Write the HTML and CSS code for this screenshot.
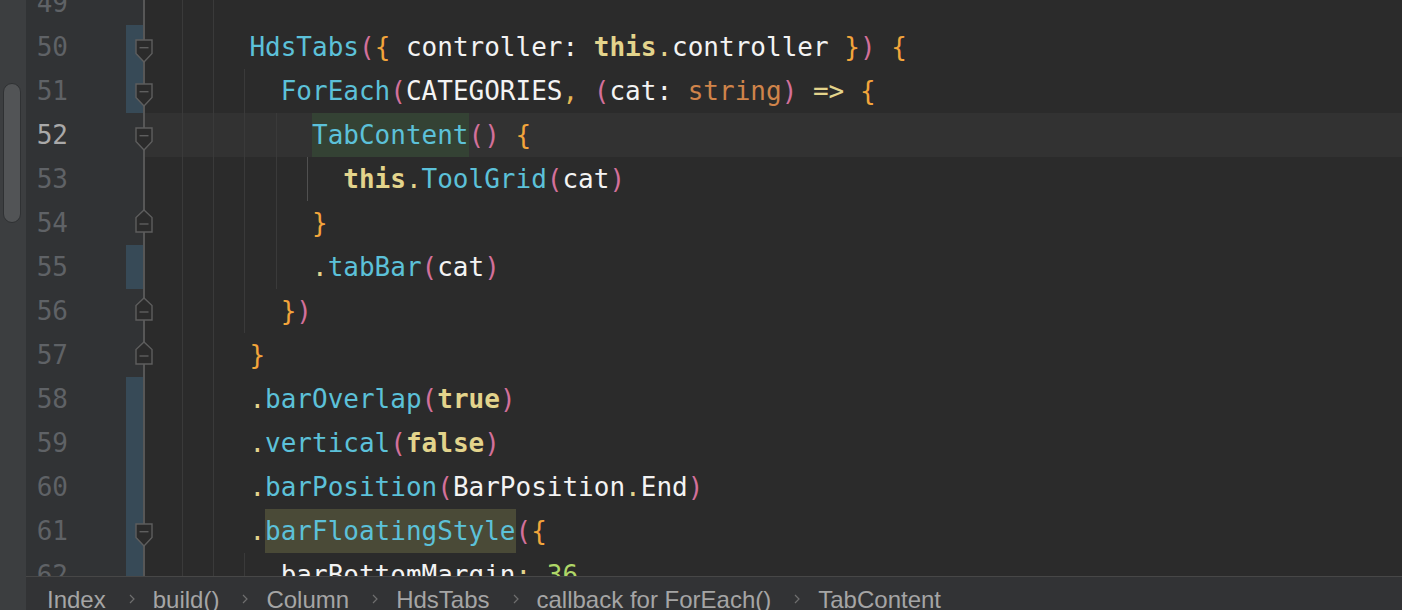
FILE: index.html
```html
<!DOCTYPE html>
<html>
<head>
<meta charset="utf-8">
<title>Editor</title>
<link rel="stylesheet" href="styles.css">
</head>
<body>
<div class="ide">
  <aside class="strip"><div class="thumb"></div></aside>
  <div class="main">
    <div class="editor">
      <div class="lines">
        <div class="row">
          <div class="gut"><span class="num">49</span><span class="mark"></span></div>
          <div class="code"><span class="ind g"></span><span class="ind g"></span></div>
        </div>
        <div class="row chg">
          <div class="gut"><span class="num">50</span><span class="mark"></span>
            <svg class="fold open" viewBox="0 0 18 24"><path d="M1 1H17V14.5L9 23L1 14.5Z"/><path d="M4.5 8.7H13.5"/></svg></div>
          <div class="code"><span class="ind g"></span><span class="ind g"></span><span class="ind"></span><span class="txt"><span class="f">HdsTabs</span><span class="p">(</span><span class="b">{</span> controller: <span class="k">this</span><span class="d">.</span>controller <span class="b">}</span><span class="p">)</span> <span class="b">{</span></span></div>
        </div>
        <div class="row chg">
          <div class="gut"><span class="num">51</span><span class="mark"></span>
            <svg class="fold open" viewBox="0 0 18 24"><path d="M1 1H17V14.5L9 23L1 14.5Z"/><path d="M4.5 8.7H13.5"/></svg></div>
          <div class="code"><span class="ind g"></span><span class="ind g"></span><span class="ind g"></span><span class="ind"></span><span class="txt"><span class="f">ForEach</span><span class="p">(</span>CATEGORIES<span class="c">,</span> <span class="p">(</span>cat: <span class="t">string</span><span class="p">)</span> <span class="d">=&gt;</span> <span class="b">{</span></span></div>
        </div>
        <div class="row cur">
          <div class="gut"><span class="num">52</span><span class="mark"></span>
            <svg class="fold open" viewBox="0 0 18 24"><path d="M1 1H17V14.5L9 23L1 14.5Z"/><path d="M4.5 8.7H13.5"/></svg></div>
          <div class="code"><span class="ind g"></span><span class="ind g"></span><span class="ind g"></span><span class="ind g"></span><span class="ind"></span><span class="txt"><span class="f hl-ref">TabContent</span><span class="p">()</span> <span class="b">{</span></span></div>
        </div>
        <div class="row">
          <div class="gut"><span class="num">53</span><span class="mark"></span></div>
          <div class="code"><span class="ind g"></span><span class="ind g"></span><span class="ind g"></span><span class="ind g"></span><span class="ind gb"></span><span class="ind"></span><span class="txt"><span class="k">this</span><span class="d">.</span><span class="f">ToolGrid</span><span class="p">(</span>cat<span class="p">)</span></span></div>
        </div>
        <div class="row">
          <div class="gut"><span class="num">54</span><span class="mark"></span>
            <svg class="fold end" viewBox="0 0 18 24"><path d="M9 1L17 8.5V23H1V8.5Z"/><path d="M4.5 15H13.5"/></svg></div>
          <div class="code"><span class="ind g"></span><span class="ind g"></span><span class="ind g"></span><span class="ind g"></span><span class="ind"></span><span class="txt"><span class="b">}</span></span></div>
        </div>
        <div class="row chg">
          <div class="gut"><span class="num">55</span><span class="mark"></span></div>
          <div class="code"><span class="ind g"></span><span class="ind g"></span><span class="ind g"></span><span class="ind g"></span><span class="ind"></span><span class="txt"><span class="d">.</span><span class="f">tabBar</span><span class="p">(</span>cat<span class="p">)</span></span></div>
        </div>
        <div class="row">
          <div class="gut"><span class="num">56</span><span class="mark"></span>
            <svg class="fold end" viewBox="0 0 18 24"><path d="M9 1L17 8.5V23H1V8.5Z"/><path d="M4.5 15H13.5"/></svg></div>
          <div class="code"><span class="ind g"></span><span class="ind g"></span><span class="ind g"></span><span class="ind"></span><span class="txt"><span class="b">}</span><span class="p">)</span></span></div>
        </div>
        <div class="row">
          <div class="gut"><span class="num">57</span><span class="mark"></span>
            <svg class="fold end" viewBox="0 0 18 24"><path d="M9 1L17 8.5V23H1V8.5Z"/><path d="M4.5 15H13.5"/></svg></div>
          <div class="code"><span class="ind g"></span><span class="ind g"></span><span class="ind"></span><span class="txt"><span class="b">}</span></span></div>
        </div>
        <div class="row chg">
          <div class="gut"><span class="num">58</span><span class="mark"></span></div>
          <div class="code"><span class="ind g"></span><span class="ind g"></span><span class="ind"></span><span class="txt"><span class="d">.</span><span class="f">barOverlap</span><span class="p">(</span><span class="k">true</span><span class="p">)</span></span></div>
        </div>
        <div class="row chg">
          <div class="gut"><span class="num">59</span><span class="mark"></span></div>
          <div class="code"><span class="ind g"></span><span class="ind g"></span><span class="ind"></span><span class="txt"><span class="d">.</span><span class="f">vertical</span><span class="p">(</span><span class="k">false</span><span class="p">)</span></span></div>
        </div>
        <div class="row chg">
          <div class="gut"><span class="num">60</span><span class="mark"></span></div>
          <div class="code"><span class="ind g"></span><span class="ind g"></span><span class="ind"></span><span class="txt"><span class="d">.</span><span class="f">barPosition</span><span class="p">(</span>BarPosition<span class="d">.</span>End<span class="p">)</span></span></div>
        </div>
        <div class="row chg">
          <div class="gut"><span class="num">61</span><span class="mark"></span>
            <svg class="fold open" viewBox="0 0 18 24"><path d="M1 1H17V14.5L9 23L1 14.5Z"/><path d="M4.5 8.7H13.5"/></svg></div>
          <div class="code"><span class="ind g"></span><span class="ind g"></span><span class="ind"></span><span class="txt"><span class="d">.</span><span class="f hl-sel">barFloatingStyle</span><span class="p">(</span><span class="b">{</span></span></div>
        </div>
        <div class="row chg">
          <div class="gut"><span class="num">62</span><span class="mark"></span></div>
          <div class="code"><span class="ind g"></span><span class="ind g"></span><span class="ind g"></span><span class="ind"></span><span class="txt">barBottomMargin<span class="d">:</span> <span class="n">36</span></span></div>
        </div>
      </div>
    </div>
    <nav class="crumbs">
      <span class="crumb">Index</span>
      <svg class="sep" viewBox="0 0 6 10"><path d="M1 1L5 5L1 9"/></svg>
      <span class="crumb">build()</span>
      <svg class="sep" viewBox="0 0 6 10"><path d="M1 1L5 5L1 9"/></svg>
      <span class="crumb">Column</span>
      <svg class="sep" viewBox="0 0 6 10"><path d="M1 1L5 5L1 9"/></svg>
      <span class="crumb">HdsTabs</span>
      <svg class="sep" viewBox="0 0 6 10"><path d="M1 1L5 5L1 9"/></svg>
      <span class="crumb">callback for ForEach()</span>
      <svg class="sep" viewBox="0 0 6 10"><path d="M1 1L5 5L1 9"/></svg>
      <span class="crumb">TabContent</span>
    </nav>
  </div>
</div>
</body>
</html>
```

FILE: styles.css
```css
* { box-sizing: border-box; margin: 0; padding: 0; }
html, body { width: 1402px; height: 610px; overflow: hidden; background: #2b2b2b; }

.ide { display: flex; height: 610px; }

.strip { width: 26px; flex: none; background: #3c3e40; padding: 83px 0 0 3px; }
.thumb { width: 18px; height: 140px; border-radius: 9px; background: #525456; border: 1.5px solid #2f3133; }

.main { flex: 1; min-width: 0; display: flex; flex-direction: column; }

.editor { flex: 1; min-height: 0; overflow: hidden; background: #2b2b2b; }
.lines { margin-top: -19px; }

.row { display: flex; height: 44px; }

.gut { width: 119px; flex: none; position: relative; display: flex; background: #313335; border-right: 2px solid #575757; }
.num { width: 42px; text-align: right; font: 26px/44px "DejaVu Sans Mono", monospace; color: #5f6266; }
.cur .num { color: #a9a9a9; }
.mark { margin-left: auto; width: 17px; }
.chg .mark { background: #374a57; }

.fold { position: absolute; left: 109px; width: 18px; height: 24px; fill: #2b2b2b; stroke: #5e5e5e; stroke-width: 1.4; }
.fold.open { top: 14px; }
.fold.end { top: 8px; }

.code { flex: 1; min-width: 0; display: flex; padding-left: 10.5px; font: 26px/44px "DejaVu Sans Mono", monospace; white-space: pre; color: #f3f3f3; }
.cur .code { background: #323232; }

.ind { width: 2ch; flex: none; }
.ind.g { background: linear-gradient(#3a3a3a, #3a3a3a) no-repeat calc(100% - 4px) 0 / 1px 100%; }
.ind.gb { background: linear-gradient(#505050, #505050) no-repeat calc(100% - 4px) 0 / 1px 100%; }

.txt { display: block; }
.f { color: #5cc1d9; }
.p { color: #d3709a; }
.b { color: #f3a53b; }
.k { color: #e3d48c; font-weight: bold; }
.d { color: #e3d48c; }
.c { color: #e3b653; }
.t { color: #d0844a; }
.n { color: #afd768; }

.hl-ref { display: inline-block; background: #344234; }
.hl-sel { display: inline-block; background: #4a4a37; }

.crumbs { height: 34px; flex: none; border-top: 1px solid #474747; background: #323335; display: flex; align-items: flex-start; padding: 11px 0 0 21px; font: 24px/24px "Liberation Sans", Arial, sans-serif; color: #a5a5a5; white-space: nowrap; overflow: hidden; }
.sep { width: 6px; height: 10px; flex: none; margin: 6px 18px 0 23px; fill: none; stroke: #6f6f6f; stroke-width: 1.2; }
```
